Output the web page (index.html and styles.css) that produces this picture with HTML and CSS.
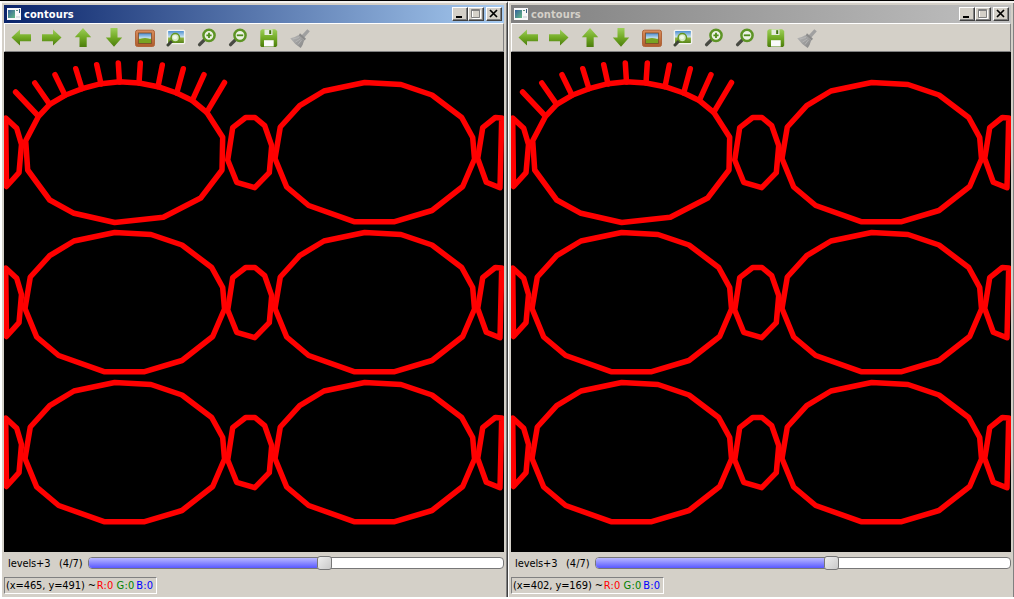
FILE: index.html
```html
<!DOCTYPE html>
<html lang="en">
<head>
<meta charset="utf-8">
<title>contours</title>
<link rel="stylesheet" href="styles.css">
</head>
<body>
<svg class="defs" aria-hidden="true">
  <defs>
    <linearGradient id="green" x1="0" y1="0" x2="0" y2="1"><stop offset="0" stop-color="#9dcf5a"/><stop offset=".5" stop-color="#72aa25"/><stop offset="1" stop-color="#4b7c0c"/></linearGradient>
    <linearGradient id="sky" x1="0" y1="0" x2="0" y2="1"><stop offset="0" stop-color="#4388cf"/><stop offset=".5" stop-color="#c9e2ee"/><stop offset=".58" stop-color="#8fb43c"/><stop offset="1" stop-color="#507d18"/></linearGradient>
    <linearGradient id="wood" x1="0" y1="0" x2="0" y2="1"><stop offset="0" stop-color="#d98d5c"/><stop offset="1" stop-color="#ae5c2c"/></linearGradient>
    <linearGradient id="app" x1="0" y1="0" x2="1" y2="1"><stop offset="0" stop-color="#345f9c"/><stop offset="1" stop-color="#63ba85"/></linearGradient>
    <linearGradient id="steel" x1="0" y1="0" x2="1" y2="1"><stop offset="0" stop-color="#b8b8b8"/><stop offset="1" stop-color="#868686"/></linearGradient>
    <symbol id="arrow-left" viewBox="0 0 20 20"><path d="M.5 9.5 9 1.5v4.7h11v7H9v4.3z" fill="url(#green)"/></symbol>
    <symbol id="arrow-right" viewBox="0 0 20 20"><path d="M19.5 9.5 11 1.5v4.7H0v7h11v4.3z" fill="url(#green)"/></symbol>
    <symbol id="arrow-up" viewBox="0 0 20 20"><path d="M10 0 18.2 9.3h-4.5V19H6.5V9.3H1.8z" fill="url(#green)"/></symbol>
    <symbol id="arrow-down" viewBox="0 0 20 20"><path d="M6.5 0h7v9.5h4.7L10 18.8 1.8 9.5h4.7z" fill="url(#green)"/></symbol>
    <symbol id="picture" viewBox="0 0 20 20"><rect x=".5" y="2.2" width="19" height="16.3" rx="2" fill="url(#wood)" stroke="#b0653a"/><rect x="3.5" y="5" width="13" height="10.5" fill="url(#sky)" stroke="#7b4f2c" stroke-width=".8"/><path d="M4 11.5q6-3 12 0V15H4z" fill="#78a323"/></symbol>
    <symbol id="picture-zoom" viewBox="0 0 20 20"><rect x="1.4" y="2.4" width="17.2" height="13.2" rx="1" fill="url(#sky)" stroke="#f4f4f0" stroke-width="1.4"/><path d="m2 17 4-4" stroke="#3e4437" stroke-width="3" stroke-linecap="round"/><circle cx="9.3" cy="9.8" r="4.2" fill="#d5e8c4" stroke="#659720" stroke-width="1.5"/><circle cx="9" cy="9.3" r="2" fill="#f0f8e7"/></symbol>
    <symbol id="lens" viewBox="0 0 20 20"><path d="m2.6 16.6 5-5" stroke="#484a43" stroke-width="3.4" stroke-linecap="round"/><circle cx="12" cy="7.3" r="5.6" fill="#edf2e5" stroke="#5d9425" stroke-width="2.5"/></symbol>
    <symbol id="zoom-in" viewBox="0 0 20 20"><use href="#lens"/><path d="M9.4 7.3h5.2M12 4.7v5.2" stroke="#4f8d1b" stroke-width="1.8"/></symbol>
    <symbol id="zoom-out" viewBox="0 0 20 20"><use href="#lens"/><path d="M8.8 7.3h6.4" stroke="#4f8d1b" stroke-width="1.8"/></symbol>
    <symbol id="save" viewBox="0 0 20 20"><path d="M3 1.2h13.2L18.2 3v14.5L17 19H2.4L1.3 18V2.7z" fill="url(#green)"/><path d="M5.5 1.5h8v5.5h-8z" fill="#e5eadf"/><path d="M10.2 2.2h2v3.8h-2z" fill="#42720d"/><path d="M5 12.2h9.7v6.3H5z" fill="#fafafa"/></symbol>
    <symbol id="broom" viewBox="0 0 20 20"><path d="M11 8 17.3 1.2 19.8 3.2 14 10z" fill="#a0a0a0"/><path d="m10 5.2 6 5.5-1.5 1.9-5.8-5.2z" fill="#8b8b8b"/><path d="M8.5 7.1 14.2 12.3Q13 17.2 10.7 20 4.4 16 .2 10.2 5 9.5 8.5 7.1z" fill="url(#steel)"/><path d="m3 11 6-1.5M5.5 14l5-3M8 16.5l3.5-4.5" stroke="#bdbdbd" stroke-width=".7"/></symbol>
    <symbol id="app-icon" viewBox="0 0 14 12"><path d="M0 0h14v12H0z" fill="#f8f8fa"/><path d="M1 2h7v8H1z" fill="url(#app)"/><path d="M9 2h2v1H9z" fill="#5d927e"/><path d="M12 1h1v4h-1z" fill="#365d83"/><path d="M9 8h4v2H9z" fill="#dde1e6"/></symbol>

    <polygon id="oval" points="114.7,232.5 151,234.5 182,245 211.7,267.5 222.7,287.5 224.5,309 212.7,336.5 182,360.5 144.7,371.7 104,371.7 58.7,355.5 36.7,337 25,308.5 30.3,277 49.7,255.7 74,241"/>
    <g id="gaps">
      <polygon points="5.7,268 16.7,278.3 21.5,294.5 19,322.7 6.5,336.5"/>
      <polygon points="245.7,267.5 255,267.5 264.7,275.7 271.7,295.7 269.3,322.7 254.7,337.7 236.7,332.3 227.7,310 232.7,277.7"/>
      <polygon points="501.7,268 495.3,267.5 482.7,277.7 477.7,308.5 486.3,332.3 500,337.7"/>
    </g>
    <symbol id="contours" viewBox="4 52 500 500">
      <g class="contour">
        <polygon points="38.3,116.7 49.7,104.3 65,95.3 82,88.7 101,83.7 119.5,81.7 139,83 158,86.7 176.7,93 192.3,100.5 206.7,112.3 222.7,137.3 222,170 200.7,198 163.3,217.3 114.7,222.5 74,213.3 49.7,200 27.7,170 25.7,140.7"/>
        <path d="M15.6 92 38.3 116M34.8 83 49.7 104.3M55 74.7 65 95.3M75.8 68.7 82 88.7M96.7 64.7 101 84M118.3 63 119.5 82M140.3 63 139 83M162.3 65 158 86.7M183.3 68.7 176.7 93M204 74.7 192.3 100.3M224.5 82.5 206.7 112.3"/>
        <use href="#gaps" y="-150"/><use href="#oval" x="250" y="-150"/>
        <use href="#gaps"/><use href="#oval"/><use href="#oval" x="250"/>
        <use href="#gaps" y="150"/><use href="#oval" y="150"/><use href="#oval" x="250" y="150"/>
      </g>
    </symbol>
  </defs>
</svg>
<main class="desktop">
  <section class="window">
    <header class="titlebar active">
      <svg class="app-icon"><use href="#app-icon"/></svg><span class="title">contours</span>
      <div class="controls">
        <span class="control"><svg viewBox="0 0 12 11"><path d="M2 8h6v2H2z"/></svg></span>
        <span class="control disabled"><svg viewBox="0 0 12 11"><path d="M2.5 2.5h8v8h-8z" fill="none" stroke="#fff"/><path d="M1.5 1.5h8v8h-8zM1 2.5h9" fill="none" stroke="#808080"/></svg></span>
        <span class="control close"><svg viewBox="0 0 12 11"><path d="m2 2 7 7m0-7-7 7" stroke="#000" stroke-width="1.7"/></svg></span>
      </div>
    </header>
    <nav class="toolbar">
      <svg><use href="#arrow-left"/></svg><svg><use href="#arrow-right"/></svg><svg><use href="#arrow-up"/></svg><svg><use href="#arrow-down"/></svg><svg><use href="#picture"/></svg><svg><use href="#picture-zoom"/></svg><svg><use href="#zoom-in"/></svg><svg><use href="#zoom-out"/></svg><svg><use href="#save"/></svg><svg><use href="#broom"/></svg>
    </nav>
    <svg class="canvas"><use href="#contours"/></svg>
    <div class="track-row"><span class="label">levels+3</span><span class="value">(4/7)</span><div class="slider"><div class="fill"></div><div class="handle"></div></div></div>
    <footer class="status"><span class="position">(x=465, y=491) ~</span><span class="channel red">R:0</span><span class="channel green">G:0</span><span class="channel blue">B:0</span></footer>
  </section>
  <section class="window">
    <header class="titlebar">
      <svg class="app-icon"><use href="#app-icon"/></svg><span class="title">contours</span>
      <div class="controls">
        <span class="control"><svg viewBox="0 0 12 11"><path d="M2 8h6v2H2z"/></svg></span>
        <span class="control disabled"><svg viewBox="0 0 12 11"><path d="M2.5 2.5h8v8h-8z" fill="none" stroke="#fff"/><path d="M1.5 1.5h8v8h-8zM1 2.5h9" fill="none" stroke="#808080"/></svg></span>
        <span class="control close"><svg viewBox="0 0 12 11"><path d="m2 2 7 7m0-7-7 7" stroke="#000" stroke-width="1.7"/></svg></span>
      </div>
    </header>
    <nav class="toolbar">
      <svg><use href="#arrow-left"/></svg><svg><use href="#arrow-right"/></svg><svg><use href="#arrow-up"/></svg><svg><use href="#arrow-down"/></svg><svg><use href="#picture"/></svg><svg><use href="#picture-zoom"/></svg><svg><use href="#zoom-in"/></svg><svg><use href="#zoom-out"/></svg><svg><use href="#save"/></svg><svg><use href="#broom"/></svg>
    </nav>
    <svg class="canvas"><use href="#contours"/></svg>
    <div class="track-row"><span class="label">levels+3</span><span class="value">(4/7)</span><div class="slider"><div class="fill"></div><div class="handle"></div></div></div>
    <footer class="status"><span class="position">(x=402, y=169) ~</span><span class="channel red">R:0</span><span class="channel green">G:0</span><span class="channel blue">B:0</span></footer>
  </section>
</main>
</body>
</html>
```
FILE: styles.css
```css
* { box-sizing: border-box; }
body { margin: 0; background: #fff; overflow: hidden; font: 11px/14px "DejaVu Sans Condensed", "DejaVu Sans", sans-serif; font-stretch: condensed; color: #000; }
.defs { position: absolute; width: 0; height: 0; }
.desktop { display: flex; width: 1015px; height: 597px; padding-left: 1px; border-top: 1px solid #000; }
.window { width: 507px; height: 596px; flex: none; padding: 2px 2px 0; background: #d4d0c8; border: 1px solid #fff; border-right: 1px solid #404040; border-bottom: 0; border-top: 2px solid #f4f2ef; box-shadow: inset -1px 0 #808080; }
.titlebar { display: flex; align-items: center; width: 500px; height: 18px; padding: 0 2px; background: linear-gradient(90deg, #808080, #c0c0c0); color: #d4d0c8; }
.titlebar.active { background: linear-gradient(90deg, #0a246a, #a6caf0); color: #fff; }
.app-icon { width: 14px; height: 12px; margin: 0 3px 0 1px; }
.title { font-weight: bold; white-space: nowrap; padding-top: 1px; letter-spacing: .1px; }
.controls { display: flex; margin-left: auto; }
.control { width: 16px; height: 14px; background: #d4d0c8; border: 1px solid; border-color: #fff #404040 #404040 #fff; box-shadow: inset -1px -1px #808080; display: flex; }
.control svg { width: 12px; height: 11px; margin-left: 1px; }
.control.close { margin-left: 2px; }
.toolbar { display: flex; gap: 11px; width: 500px; height: 29px; padding: 4px 6px 0; border: 1px solid; border-color: #fff #808080 #808080 #fff; }
.toolbar svg { width: 20px; height: 20px; flex: none; }
.canvas { display: block; width: 500px; height: 500px; background: #000; }
.contour { fill: none; stroke: #f00; stroke-width: 5.5; stroke-linejoin: round; stroke-linecap: round; }
.track-row { display: flex; align-items: center; width: 500px; height: 22px; padding-left: 4px; }
.label { width: 51px; padding-top: 2px; white-space: nowrap; letter-spacing: -.1px; }
.value { width: 29px; padding-top: 2px; white-space: nowrap; }
.slider { display: flex; align-items: center; flex: 1; height: 12px; background: #fff; border: 1px solid #777; border-radius: 4px; }
.fill { width: 228px; height: 10px; border-radius: 3px 0 0 3px; background: linear-gradient(#b8b8ff, #5959ff); }
.handle { width: 15px; height: 14px; flex: none; margin: -2px 0; border: 1px solid #777; border-radius: 3px; background: linear-gradient(135deg, #eee, #c9c9c9); }
.status { display: flex; width: 153px; height: 17px; margin-top: 3px; padding: 1px 0 0 1px; border: 1px solid; border-color: #808080 #fff #fff #808080; white-space: nowrap; }
.position { width: 92px; letter-spacing: -.1px; }
.channel { width: 20px; letter-spacing: .2px; }
.red { color: #f00; }
.green { color: #008000; }
.blue { color: #00f; }
```
